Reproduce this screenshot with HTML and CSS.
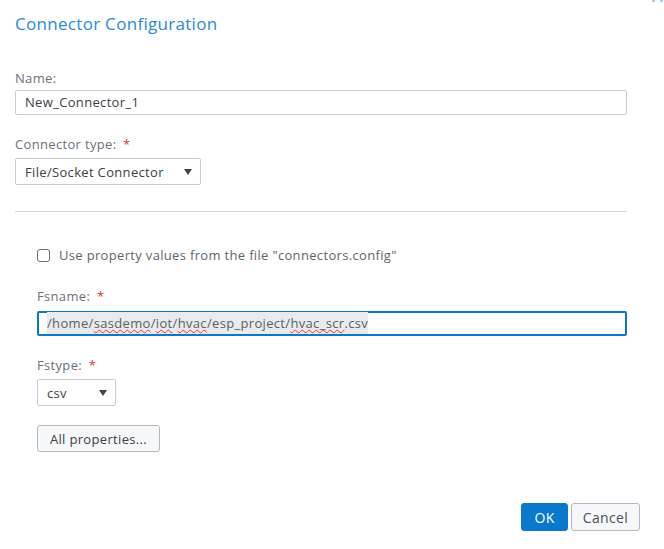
FILE: index.html
```html
<!DOCTYPE html>
<html>
<head>
<meta charset="utf-8">
<link rel="stylesheet" href="styles.css">
</head>
<body>
<div class="dialog">
  <span class="corner" aria-hidden="true"><i></i><i></i></span>
  <div class="form">
    <h1 class="title">Connector Configuration</h1>
    <label class="label label-name">Name:</label>
    <div class="input input-name">New_Connector_1</div>
    <label class="label label-type">Connector type: <span class="req">*</span></label>
    <div class="select select-type"><span>File/Socket Connector</span><span class="arrow"></span></div>
    <hr class="divider">
    <div class="props">
      <div class="check-row"><span class="checkbox"></span><span>Use property values from the file "connectors.config"</span></div>
      <label class="label label-fsname">Fsname: <span class="req">*</span></label>
      <div class="input input-fsname"><span class="sel">/home/<span class="sp">sasdemo</span>/<span class="sp">iot</span>/<span class="sp">hvac</span>/esp_project/<span class="sp">hvac_scr</span>.csv</span></div>
      <label class="label label-fstype">Fstype: <span class="req">*</span></label>
      <div class="select select-csv"><span>csv</span><span class="arrow"></span></div>
      <button class="btn btn-all">All properties...</button>
    </div>
  </div>
  <div class="footer">
    <button class="btn btn-ok">OK</button>
    <button class="btn btn-cancel">Cancel</button>
  </div>
</div>
</body>
</html>
```
FILE: styles.css
```css
* { box-sizing: border-box; }
html, body { margin: 0; padding: 0; background: #fff; }
body {
  font-family: "Open Sans", Lato, "Liberation Sans", sans-serif;
  font-size: 13px;
  letter-spacing: 0.33px;
  color: #3c4048;
  width: 664px;
  height: 549px;
  overflow: hidden;
}
.dialog { position: relative; width: 664px; height: 549px; }
.corner { position: absolute; top: 0; right: 1px; display: flex; gap: 5px; }
.corner i { display: block; width: 3px; height: 2px; background: #a9cdf0; }
.form { padding: 0 37px 0 15px; display: flex; flex-direction: column; align-items: flex-start; }
.title {
  margin: 12px 0 0;
  font-size: 17px;
  letter-spacing: 0.3px;
  line-height: 24px;
  font-weight: 400;
  color: #2a8ad6;
}
.label {
  display: block;
  line-height: 16px;
  color: #6b717c;
}
.req { color: #e0342b; margin-left: 3px; }
.label-name { margin-top: 34px; }
.label-type { margin-top: 21px; }
.input {
  height: 25px;
  border: 1px solid #c9ccd2;
  border-radius: 2px;
  line-height: 23px;
  padding: 0 9px;
  color: #3c4048;
  white-space: nowrap;
}
.input-name { margin-top: 4px; width: 612px; }
.select {
  height: 27px;
  border: 1px solid #c9ccd2;
  border-radius: 2px;
  display: flex;
  align-items: center;
  justify-content: space-between;
  padding: 0 8px 0 9px;
  color: #3c4048;
}
.arrow {
  width: 0; height: 0;
  border-left: 4px solid transparent;
  border-right: 4px solid transparent;
  border-top: 6px solid #3f434a;
}
.select-type { margin-top: 6px; width: 186px; }
.divider {
  align-self: stretch;
  margin: 26px 0 0;
  border: 0;
  border-top: 1px solid #d3d6db;
  height: 0;
}
.props {
  align-self: stretch;
  padding-left: 22px;
  display: flex;
  flex-direction: column;
  align-items: flex-start;
}
.check-row {
  margin-top: 35px;
  display: flex;
  align-items: center;
  gap: 9px;
  line-height: 16px;
  color: #5f6570;
}
.checkbox {
  width: 13px; height: 13px;
  border: 1px solid #6a6f78;
  border-radius: 3px;
  margin-top: 1px;
}
.label-fsname { margin-top: 25px; }
.input-fsname {
  margin-top: 7px;
  width: 590px;
  border: 2px solid #0a78cc;
  line-height: 21px;
  padding: 0 8px;
}
.sel { background: #e9eaec; color: #5a5f68; padding: 2px 0; }
.sp {
  text-decoration-line: underline;
  text-decoration-style: wavy;
  text-decoration-color: #f0302c;
  text-decoration-thickness: 1px;
  text-underline-offset: 1px;
}
.label-fstype { margin-top: 21px; }
.select-csv { margin-top: 6px; width: 79px; }
.btn {
  font-family: inherit;
  font-size: 13px;
  letter-spacing: 0.33px;
  height: 27px;
  border-radius: 3px;
  border: 1px solid #b3b8c1;
  background: #f6f7f9;
  color: #3c4048;
  padding: 0;
  cursor: pointer;
}
.btn-all { margin-top: 19px; width: 123px; }
.footer {
  margin-top: 51px;
  display: flex;
  justify-content: flex-end;
  gap: 3px;
  padding-right: 24px;
}
.btn-ok {
  width: 47px; height: 28px;
  background: #0a78cc;
  border-color: #0a78cc;
  color: #fff;
  font-size: 14px;
}
.btn-cancel { width: 69px; height: 28px; font-size: 14px; color: #4a4f57; }
```
